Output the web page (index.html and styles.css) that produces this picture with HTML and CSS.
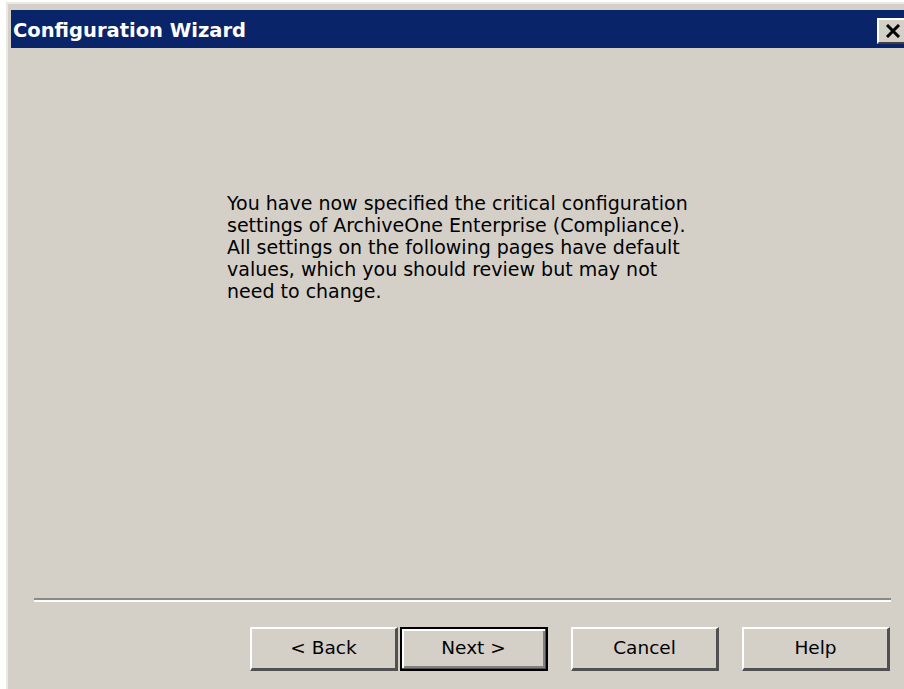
FILE: index.html
```html
<!DOCTYPE html>
<html lang="en">
<head>
<meta charset="utf-8">
<title>Configuration Wizard</title>
<link rel="stylesheet" href="styles.css">
</head>
<body>
<div class="window">
  <div class="titlebar">
    <span class="title">Configuration Wizard</span>
    <button class="close" aria-label="Close">
      <svg width="16" height="14" viewBox="0 0 16 14"><path d="M2 1 L14 13 M14 1 L2 13" stroke="#000" stroke-width="3" fill="none"/></svg>
    </button>
  </div>
  <div class="content">
    <p class="message">You have now specified the critical configuration<br>settings of ArchiveOne Enterprise (Compliance).<br>All settings on the following pages have default<br>values, which you should review but may not<br>need to change.</p>
  </div>
  <div class="separator"></div>
  <div class="buttons">
    <button class="btn">&lt; Back</button>
    <button class="btn default">Next &gt;</button>
    <button class="btn gap">Cancel</button>
    <button class="btn gap">Help</button>
  </div>
</div>
</body>
</html>
```

FILE: styles.css
```css
html, body {
  margin: 0;
  padding: 0;
  background: #ffffff;
  overflow: hidden;
}

.window {
  margin: 2px 0 0 6px;
  height: 687px;
  box-sizing: border-box;
  background: #d4d0c8;
  border-left: 2px solid #ebe9e4;
  border-top: 2px solid #ebe9e4;
  padding: 6px 0 0 3px;
  display: flex;
  flex-direction: column;
  font-family: "DejaVu Sans", Tahoma, sans-serif;
  color: #000;
}

.titlebar {
  height: 38px;
  background: #0a246a;
  display: flex;
  align-items: center;
  justify-content: space-between;
  flex-shrink: 0;
}

.title {
  color: #fff;
  font-weight: bold;
  font-size: 19.5px;
  padding-left: 2px;
  padding-top: 3px;
}

.close {
  width: 27px;
  height: 26px;
  margin-top: 3px;
  padding: 0 0 0 6px;
  background: #d4d0c8;
  border: none;
  border-top: 2px solid #fff;
  border-left: 2px solid #fff;
  border-bottom: 2px solid #404040;
  display: flex;
  align-items: center;
  justify-content: flex-start;
  box-sizing: border-box;
}

.content {
  flex: 1;
  padding-left: 216px;
}

.message {
  margin: 144px 0 0;
  font-size: 19px;
  line-height: 22px;
  white-space: nowrap;
}

.separator {
  margin: 0 13px 0 23px;
  height: 2px;
  background: #8c8a86;
  border-bottom: 2px solid #fafafa;
  flex-shrink: 0;
}

.buttons {
  display: flex;
  padding: 25px 13px 18px 239px;
  flex-shrink: 0;
}

.btn {
  width: 148px;
  height: 44px;
  box-sizing: border-box;
  background: #d4d0c8;
  font-family: "DejaVu Sans", Tahoma, sans-serif;
  font-size: 18.5px;
  color: #000;
  border-top: 2px solid #fff;
  border-left: 2px solid #fff;
  border-right: 3px solid #505050;
  border-bottom: 3px solid #505050;
  padding: 0 0 2px;
}

.btn.default {
  margin-left: 2px;
  outline: 2px solid #000;
  outline-offset: -2px;
  border-top-color: #000;
  border-left-color: #000;
  box-shadow: inset 2px 2px 0 #fff, inset -2px -2px 0 #808080;
}

.btn.gap {
  margin-left: 23px;
}
```
